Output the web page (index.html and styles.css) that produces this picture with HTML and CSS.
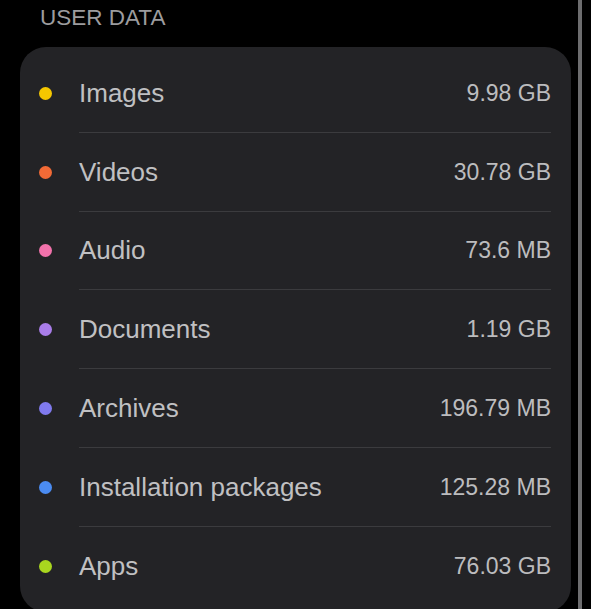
FILE: index.html
```html
<!DOCTYPE html>
<html>
<head>
  <meta charset="utf-8">
  <link rel="stylesheet" href="styles.css">
</head>
<body>
  <div class="screen">
    <div class="content">
      <div class="section-title">USER DATA</div>

      <div class="card">
        <div class="item">
          <span class="dot dot-images"></span>
          <div class="item-body">
            <span class="label">Images</span>
            <span class="size">9.98 GB</span>
          </div>
        </div>
        <div class="item">
          <span class="dot dot-videos"></span>
          <div class="item-body">
            <span class="label">Videos</span>
            <span class="size">30.78 GB</span>
          </div>
        </div>
        <div class="item">
          <span class="dot dot-audio"></span>
          <div class="item-body">
            <span class="label">Audio</span>
            <span class="size">73.6 MB</span>
          </div>
        </div>
        <div class="item">
          <span class="dot dot-documents"></span>
          <div class="item-body">
            <span class="label">Documents</span>
            <span class="size">1.19 GB</span>
          </div>
        </div>
        <div class="item">
          <span class="dot dot-archives"></span>
          <div class="item-body">
            <span class="label">Archives</span>
            <span class="size">196.79 MB</span>
          </div>
        </div>
        <div class="item">
          <span class="dot dot-packages"></span>
          <div class="item-body">
            <span class="label">Installation packages</span>
            <span class="size">125.28 MB</span>
          </div>
        </div>
        <div class="item">
          <span class="dot dot-apps"></span>
          <div class="item-body">
            <span class="label">Apps</span>
            <span class="size">76.03 GB</span>
          </div>
        </div>
      </div>
    </div>

    <div class="scroll-track"></div>
  </div>
</body>
</html>
```

FILE: styles.css
```css
html,
body {
  margin: 0;
  height: 100%;
  background: #000;
  overflow: hidden;
}

body {
  font-family: 'Liberation Sans', Arial, sans-serif;
  color: #c2c2c4;
}

.screen {
  display: flex;
  height: 100%;
}

.content {
  width: 551px;
  padding-left: 20px;
}

.section-title {
  font-size: 22.5px;
  line-height: 36px;
  padding-left: 20px;
  margin-bottom: 11px;
  color: #9c9c9e;
}

.card {
  background: #232326;
  border-radius: 26px;
  padding-top: 7px;
  padding-bottom: 6px;
}

.item {
  display: flex;
  align-items: center;
  height: 78.8px;
}

.dot {
  flex: none;
  width: 13px;
  height: 13px;
  border-radius: 50%;
  margin-left: 19px;
  margin-right: 27px;
}

.dot-images { background: #f5c700; }
.dot-videos { background: #f26a36; }
.dot-audio { background: #f272ab; }
.dot-documents { background: #a97de9; }
.dot-archives { background: #807aee; }
.dot-packages { background: #4b8cf2; }
.dot-apps { background: #a9d61f; }

.item-body {
  flex: 1;
  height: 100%;
  display: flex;
  align-items: center;
  justify-content: space-between;
  margin-right: 20px;
  border-bottom: 1px solid #3b3b3e;
  box-sizing: border-box;
  padding-top: 1px;
}

.item:last-child .item-body {
  border-bottom: none;
}

.label {
  font-size: 26px;
  color: #c0c0c2;
}

.size {
  font-size: 23px;
  color: #bcbcbe;
}

.scroll-track {
  width: 4px;
  margin-left: 7px;
  background: #6d6d6f;
}
```
